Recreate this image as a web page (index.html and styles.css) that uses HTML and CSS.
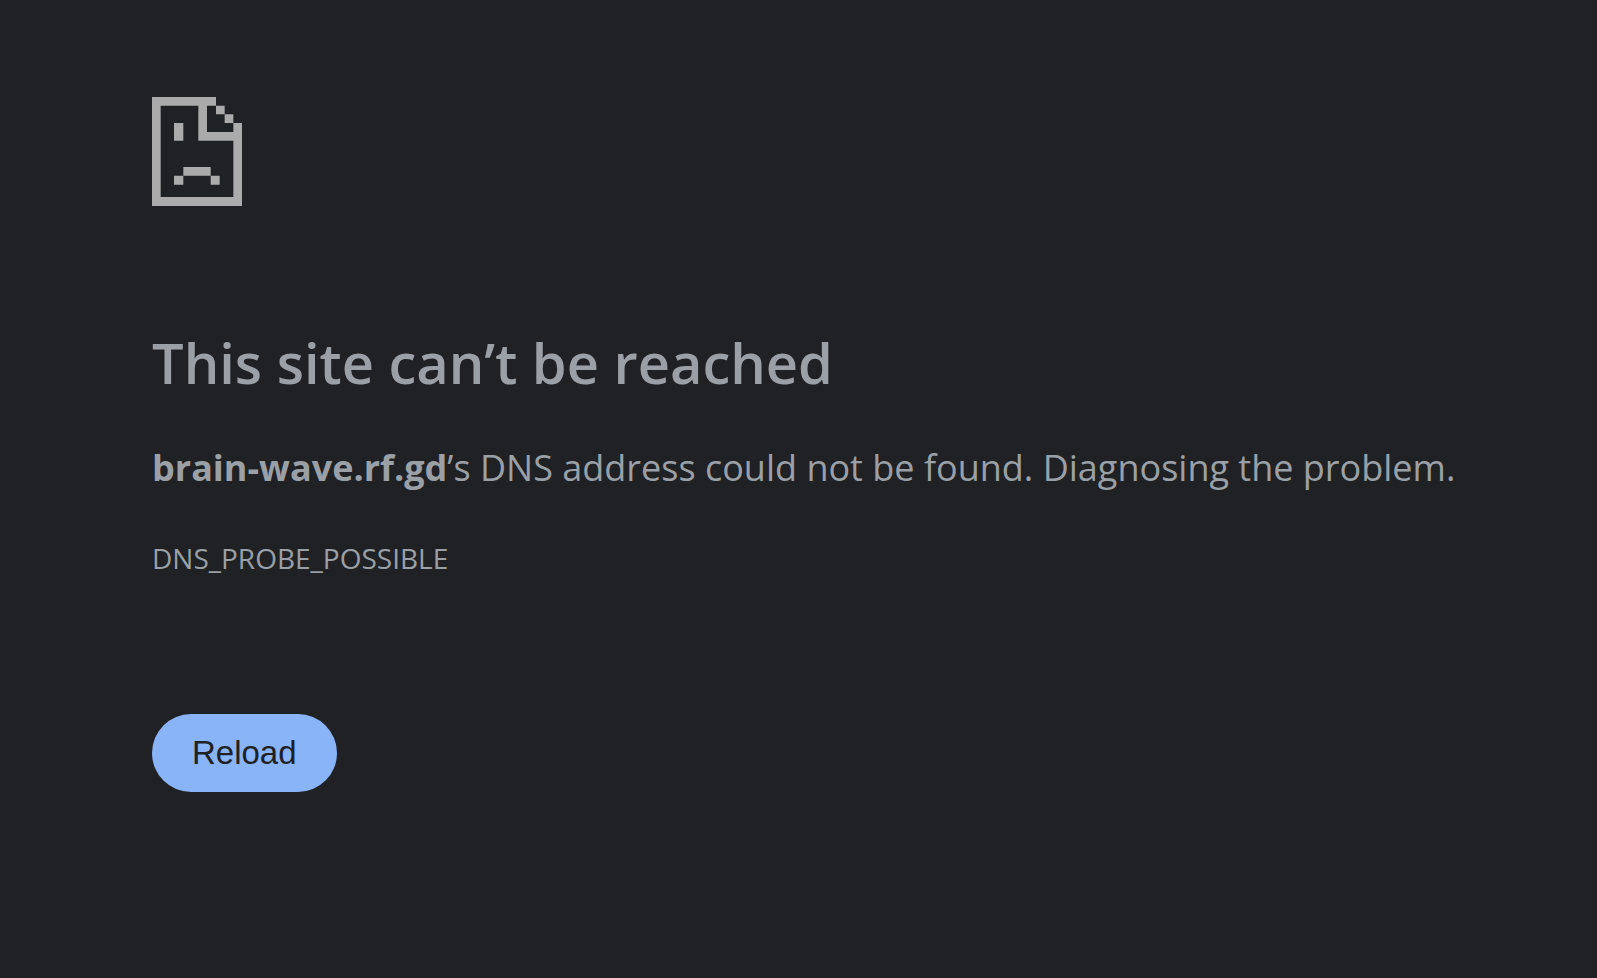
FILE: index.html
```
<!DOCTYPE html>
<html lang="en">
<head>
<meta charset="utf-8">
<meta name="viewport" content="width=device-width, initial-scale=1">
<title>brain-wave.rf.gd</title>
<link rel="stylesheet" href="styles.css">
</head>
<body>
<main class="error-page">
  <svg class="error-icon" viewBox="0 0 270 327" aria-hidden="true" shape-rendering="geometricPrecision">
    <path fill-rule="evenodd" d="M0 0H192V26H218V52H244V78H270V327H0ZM26 26V300H244V131H139V26ZM165 26V105H244V78H218V52H192V26Z"/>
    <path d="M66 78H94V131H66ZM94 210H176V236H94ZM66 236H94V263H66ZM176 236H203V263H176Z"/>
  </svg>
  <h1 class="error-title">This site can’t be reached</h1>
  <p class="error-summary"><strong>brain-wave.rf.gd</strong>’s DNS address could not be found. Diagnosing the problem.</p>
  <p class="error-code">DNS_PROBE_POSSIBLE</p>
  <button class="reload-button" type="button">Reload</button>
</main>
</body>
</html>
```
FILE: styles.css
```
* {
  box-sizing: border-box;
}

body {
  margin: 0;
  min-height: 100vh;
  background: #202124;
  color: #9aa0a6;
  font-family: "Open Sans", "Noto Sans", sans-serif;
}

.error-page {
  display: flex;
  flex-direction: column;
  align-items: flex-start;
  padding: 97px 120px 97px 152px;
}

.error-icon {
  width: 90px;
  height: 109px;
  fill: #ababab;
}

.error-title {
  margin: 116px 0 0;
  font-size: 56px;
  font-weight: 600;
  line-height: 80px;
}

.error-summary {
  margin: 40px 0 0;
  font-size: 36px;
  line-height: 52px;
}

.error-code {
  margin: 44px 0 0;
  font-size: 28px;
  line-height: 40px;
}

.reload-button {
  margin: 136px 0 0;
  padding: 20px 40px;
  border: 0;
  border-radius: 39px;
  background: #8ab4f8;
  color: #202124;
  font-family: "Liberation Sans", Arial, sans-serif;
  font-size: 33px;
  line-height: 38px;
}
```
